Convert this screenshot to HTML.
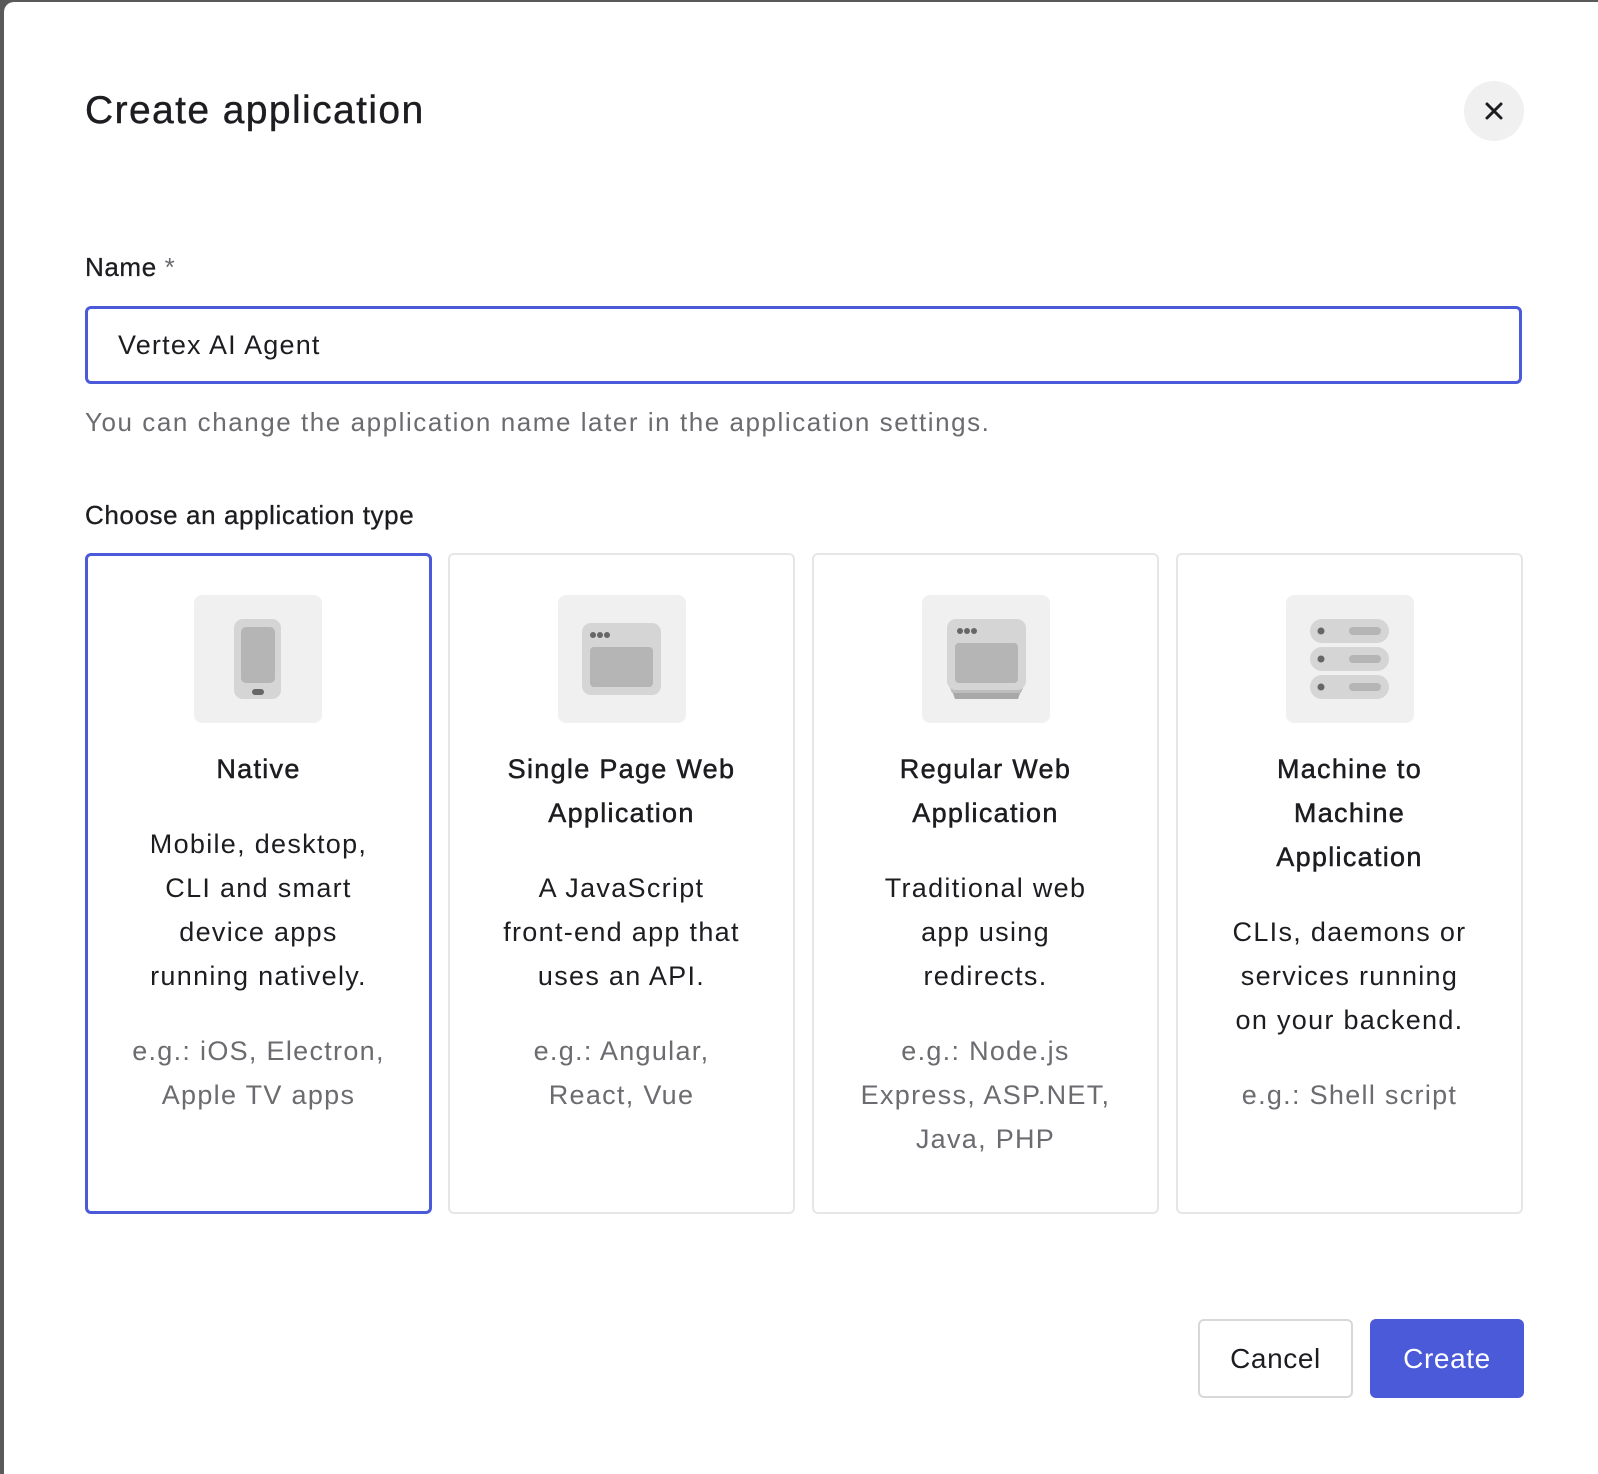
<!DOCTYPE html>
<html><head><meta charset="utf-8"><style>
*{box-sizing:border-box;margin:0;padding:0}
body{width:1598px;height:1474px;background:#5a5a5a;font-family:"Liberation Sans",sans-serif;color:#1d1d21;overflow:hidden;position:relative}
.modal{position:absolute;left:4px;top:2px;width:1594px;height:1472px;background:#fff;border-top-left-radius:10px}
h1{position:absolute;left:81px;top:87px;font-size:39px;font-weight:normal;letter-spacing:1.4px;-webkit-text-stroke:0.4px #1d1d21}
.close{position:absolute;left:1460px;top:79px;width:60px;height:60px;border-radius:50%;background:#f0f0f0}
.lbl{position:absolute;left:81px;font-size:26px;letter-spacing:0.6px;-webkit-text-stroke:0.3px #1d1d21}
.input{position:absolute;left:81px;top:304px;width:1437px;height:78px;border:3px solid #4a5ad9;border-radius:6px;font-size:27px;padding-left:30px;line-height:72px;letter-spacing:1.2px}
.help{position:absolute;left:81px;top:405px;font-size:26px;color:#6b6b70;letter-spacing:1.55px}
.card{position:absolute;top:551px;width:347px;height:661px;border:2px solid #e6e6e6;border-radius:6px;text-align:center}
.card.sel{border:3px solid #4a5ad9}
.icon{position:absolute;left:108px;top:40px;width:128px;height:128px;background:#f0f0f0;border-radius:8px}
.txt{position:absolute;left:-10px;right:-10px;top:192px;font-size:27px;line-height:44px;letter-spacing:1.3px}
.t{margin-bottom:31px;-webkit-text-stroke:0.5px #1d1d21}
.d{margin-bottom:31px}
.e{color:#6b6b70}
.btn{position:absolute;top:1317px;height:79px;border-radius:6px;font-size:28px;line-height:75px;text-align:center;letter-spacing:0.6px}
</style></head><body>
<div class="modal">
<h1>Create application</h1>
<div class="close"><svg width="60" height="60" viewBox="0 0 60 60"><path d="M23 23L37 37M37 23L23 37" stroke="#1d1d21" stroke-width="3" stroke-linecap="round"/></svg></div>
<div class="lbl" style="top:250px">Name <span style="color:#6b6b70;-webkit-text-stroke:0">*</span></div>
<div class="input">Vertex AI Agent</div>
<div class="help">You can change the application name later in the application settings.</div>
<div class="lbl" style="top:498px">Choose an application type</div>

<div class="card sel" style="left:81px"><div class="icon" style="left:106px;top:39px"><svg width="128" height="128"><rect x="40" y="24" width="47" height="80" rx="9" fill="#d5d5d5"/><rect x="47" y="32" width="34" height="56" rx="5" fill="#b5b5b5"/><rect x="58" y="94" width="12" height="6" rx="3" fill="#666"/></svg></div>
<div class="txt" style="top:191px"><div class="t">Native</div><div class="d">Mobile, desktop,<br>CLI and smart<br>device apps<br>running natively.</div><div class="e">e.g.: iOS, Electron,<br>Apple TV apps</div></div></div>

<div class="card" style="left:444px"><div class="icon"><svg width="128" height="128"><rect x="24" y="28" width="79" height="72" rx="9" fill="#d5d5d5"/><circle cx="35" cy="40" r="3" fill="#666"/><circle cx="42" cy="40" r="3" fill="#666"/><circle cx="49" cy="40" r="3" fill="#666"/><rect x="32" y="52" width="63" height="40" rx="4" fill="#b5b5b5"/></svg></div>
<div class="txt"><div class="t">Single Page Web<br>Application</div><div class="d">A JavaScript<br>front-end app that<br>uses an API.</div><div class="e">e.g.: Angular,<br>React, Vue</div></div></div>

<div class="card" style="left:808px"><div class="icon"><svg width="128" height="128"><path d="M28 90H101L96 104H33Z" fill="#a8a8a8"/><path d="M26 88H103L99 98H30Z" fill="#bdbdbd"/><rect x="25" y="24" width="79" height="71" rx="9" fill="#d5d5d5"/><circle cx="38" cy="36" r="3" fill="#666"/><circle cx="45" cy="36" r="3" fill="#666"/><circle cx="52" cy="36" r="3" fill="#666"/><rect x="33" y="48" width="63" height="40" rx="4" fill="#b5b5b5"/></svg></div>
<div class="txt"><div class="t">Regular Web<br>Application</div><div class="d">Traditional web<br>app using<br>redirects.</div><div class="e">e.g.: Node.js<br>Express, ASP.NET,<br>Java, PHP</div></div></div>

<div class="card" style="left:1172px"><div class="icon"><svg width="128" height="128"><g fill="#d5d5d5"><rect x="24" y="24" width="79" height="24" rx="12"/><rect x="24" y="52" width="79" height="24" rx="12"/><rect x="24" y="80" width="79" height="24" rx="12"/></g><g fill="#666"><circle cx="35" cy="36" r="3.5"/><circle cx="35" cy="64" r="3.5"/><circle cx="35" cy="92" r="3.5"/></g><g fill="#b5b5b5"><rect x="63" y="32" width="32" height="8" rx="4"/><rect x="63" y="60" width="32" height="8" rx="4"/><rect x="63" y="88" width="32" height="8" rx="4"/></g></svg></div>
<div class="txt"><div class="t">Machine to<br>Machine<br>Application</div><div class="d">CLIs, daemons or<br>services running<br>on your backend.</div><div class="e">e.g.: Shell script</div></div></div>

<div class="btn" style="left:1194px;width:155px;border:2px solid #d8d8d8">Cancel</div>
<div class="btn" style="left:1366px;width:154px;background:#4a5ad9;color:#fff;line-height:79px">Create</div>
</div>
</body></html>
